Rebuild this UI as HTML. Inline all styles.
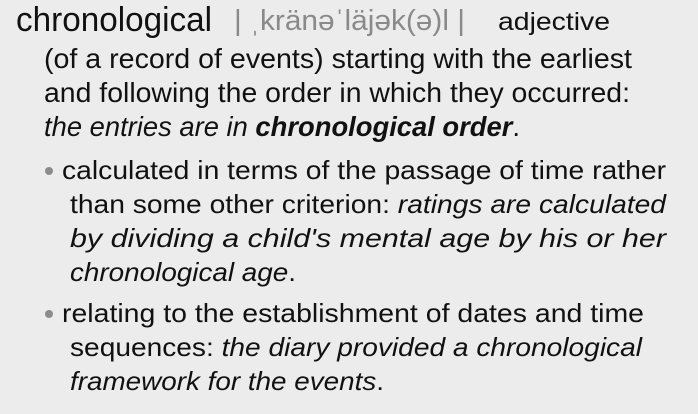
<!DOCTYPE html>
<html><head><meta charset="utf-8"><style>
html,body{margin:0;padding:0;width:698px;height:414px;overflow:hidden;background:#ececec;}
.l{position:absolute;white-space:nowrap;line-height:1;font-family:"Liberation Sans",sans-serif;color:#111;transform-origin:0 0;}
.f{font-size:28px;}
.b{font-size:26px;}
.g{color:#8a8a8a;}
.dot{position:absolute;width:8px;height:8px;border-radius:50%;background:#8c8c8c;}
</style></head><body>
<div class="l" style="left:16px;top:3px;font-size:34px">chronological</div>
<div class="l g" style="left:234px;top:7px;font-size:29px">| ˌkränəˈläjək(ə)l |</div>
<div class="l" style="left:498px;top:10px;font-size:25px">adjective</div>

<div class="l f" style="left:44px;top:45px">(of a record of events) starting with the earliest</div>
<div class="l f" style="left:44px;top:79px">and following the order in which they occurred:</div>
<div class="l f" style="left:44px;top:113px"><i>the entries are in <b>chronological order</b></i>.</div>

<div class="dot" style="left:45px;top:167px"></div>
<div class="l b" style="left:62px;top:157px">calculated in terms of the passage of time rather</div>
<div class="l b" style="left:70px;top:191px">than some other criterion: <i>ratings are calculated</i></div>
<div class="l b" style="left:70px;top:225px"><i>by dividing a child's mental age by his or her</i></div>
<div class="l b" style="left:70px;top:259px"><i>chronological age</i>.</div>

<div class="dot" style="left:45px;top:310px"></div>
<div class="l b" style="left:62px;top:300px">relating to the establishment of dates and time</div>
<div class="l b" style="left:70px;top:334px">sequences: <i>the diary provided a chronological</i></div>
<div class="l b" style="left:70px;top:368px"><i>framework for the events</i>.</div>
<script>
var w=[196,231,112,588,586,476,604,596,596,226,582,572,314];
var els=document.querySelectorAll('.l');
for(var i=0;i<els.length;i++){var a=els[i].getBoundingClientRect().width;els[i].style.transform='scaleX('+(w[i]/a)+')';}
</script>
</body></html>
